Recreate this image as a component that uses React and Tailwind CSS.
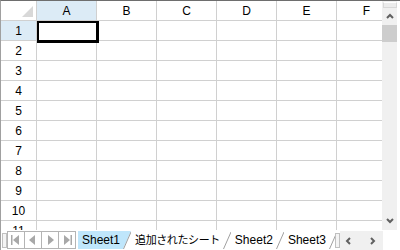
import React from "react";

const cols = ["A", "B", "C", "D", "E", "F"];
const rows = [1, 2, 3, 4, 5, 6, 7, 8, 9, 10, 11];

function Chevron({ dir }) {
  const d = {
    up: "M2 6 L5 3 L8 6",
    down: "M2 4 L5 7 L8 4",
    left: "M6 2 L3 5 L6 8",
    right: "M4 2 L7 5 L4 8",
  }[dir];
  return (
    <svg width="10" height="10" viewBox="0 0 10 10">
      <path d={d} fill="none" stroke="#606060" strokeWidth="2" />
    </svg>
  );
}

function NavBtn({ kind, last }) {
  const fill = "#a8a8a8";
  let shape;
  if (kind === "first")
    shape = (
      <>
        <rect x="3" y="3" width="1.5" height="10" fill={fill} />
        <path d="M11 3 L5 8 L11 13 Z" fill={fill} />
      </>
    );
  if (kind === "prev") shape = <path d="M10 3 L4 8 L10 13 Z" fill={fill} />;
  if (kind === "next") shape = <path d="M6 3 L12 8 L6 13 Z" fill={fill} />;
  if (kind === "last")
    shape = (
      <>
        <path d="M5 3 L11 8 L5 13 Z" fill={fill} />
        <rect x="11.5" y="3" width="1.5" height="10" fill={fill} />
      </>
    );
  return (
    <div
      className={`w-[17px] h-full flex items-center justify-center ${
        last ? "" : "border-r border-[#b4b4b4]"
      }`}
    >
      <svg width="16" height="16" viewBox="0 0 16 16">
        {shape}
      </svg>
    </div>
  );
}

function Tab({ label, active, cjk }) {
  return (
    <div className="flex items-center h-[18px] shrink-0">
      <div
        className={`h-full flex items-center pl-[4px] pr-[3px] ${
          active ? "bg-[#bfe6fb]" : "bg-white"
        } ${cjk ? "text-[11px] tracking-[-0.4px]" : ""}`}
      >
        {label}
      </div>
      <svg width="8" height="18" viewBox="0 0 8 18" className="block">
        {active && <path d="M0 0 L8 0 L0 18 Z" fill="#bfe6fb" />}
        <path d="M8 1 L0.5 18" stroke="#a0a0a0" strokeWidth="1" />
      </svg>
    </div>
  );
}

export default function App() {
  return (
    <div
      className="w-[400px] h-[250px] bg-white border-t border-t-[#6e6e6e] border-l border-l-[#a0a0a0] overflow-hidden flex flex-col text-[12px] text-black"
      style={{ fontFamily: '"Liberation Sans", "Noto Sans CJK JP", sans-serif' }}
    >
      <div className="flex h-[229px] shrink-0">
        <div className="relative w-[381px] shrink-0 overflow-hidden">
          {/* header row */}
          <div className="flex h-[20px]">
            <div className="w-[36px] shrink-0 h-full border-r border-b border-[#d0d0d0] relative">
              <svg className="absolute right-[3px] bottom-[3px]" width="11" height="11" viewBox="0 0 11 11">
                <path d="M11 0 L11 11 L0 11 Z" fill="#d8d8d8" />
              </svg>
            </div>
            {cols.map((c, i) => (
              <div
                key={c}
                className={`w-[60px] shrink-0 h-full border-r border-b border-[#d0d0d0] flex items-center justify-center ${
                  i === 0 ? "bg-[#dcebf6]" : ""
                }`}
              >
                {c}
              </div>
            ))}
          </div>
          {rows.map((r) => (
            <div key={r} className="flex h-[20px]">
              <div
                className={`w-[36px] shrink-0 h-full border-r border-b border-[#d0d0d0] flex items-center justify-center ${
                  r === 1 ? "bg-[#dcebf6]" : ""
                }`}
              >
                {r}
              </div>
              {cols.map((c) => (
                <div key={c} className="w-[60px] shrink-0 h-full border-r border-b border-[#d0d0d0]" />
              ))}
            </div>
          ))}
          <div className="absolute left-[36px] top-[20px] w-[62px] h-[22px] border-l-2 border-t-2 border-r-[3px] border-b-[3px] border-black" />
        </div>
        {/* vertical scrollbar */}
        <div className="w-[15px] shrink-0 h-full bg-[#f0f0f0] flex flex-col items-center">
          <div className="w-[14px] h-[6px] mt-[1px] border border-[#d8d8d8] border-t-[#ffffff] bg-[#ececec]" />
          <div className="h-[14px] flex items-center justify-center mt-[2px]">
            <Chevron dir="up" />
          </div>
          <div className="w-[15px] h-[17px] bg-[#cdcdcd] mt-[1px]" />
          <div className="flex-1" />
          <div className="h-[14px] flex items-center justify-center mb-[3px]">
            <Chevron dir="down" />
          </div>
        </div>
      </div>
      {/* tab bar */}
      <div className="flex h-[20px] items-start pt-[1px] text-[12px]">
        <div className="w-[5px] h-[15px] mt-[2px] ml-[1px] border border-[#c0c0c0] bg-[#f4f4f4] shrink-0" />
        <div className="flex border border-[#b4b4b4] h-[18px] w-[69px] shrink-0">
          <NavBtn kind="first" />
          <NavBtn kind="prev" />
          <NavBtn kind="next" />
          <NavBtn kind="last" last />
        </div>
        <div className="flex ml-[2px] w-[257px] overflow-hidden shrink-0">
          <Tab label="Sheet1" active />
          <Tab label="追加されたシート" cjk />
          <Tab label="Sheet2" />
          <Tab label="Sheet3" />
        </div>
        <div className="w-[5px] h-[15px] mt-[2px] border border-[#c0c0c0] bg-[#f4f4f4] shrink-0" />
        <div className="w-[43px] h-[19px] bg-[#f0f0f0] flex items-center shrink-0">
          <div className="ml-[4px]">
            <Chevron dir="left" />
          </div>
          <div className="ml-[13px]">
            <Chevron dir="right" />
          </div>
        </div>
      </div>
    </div>
  );
}
